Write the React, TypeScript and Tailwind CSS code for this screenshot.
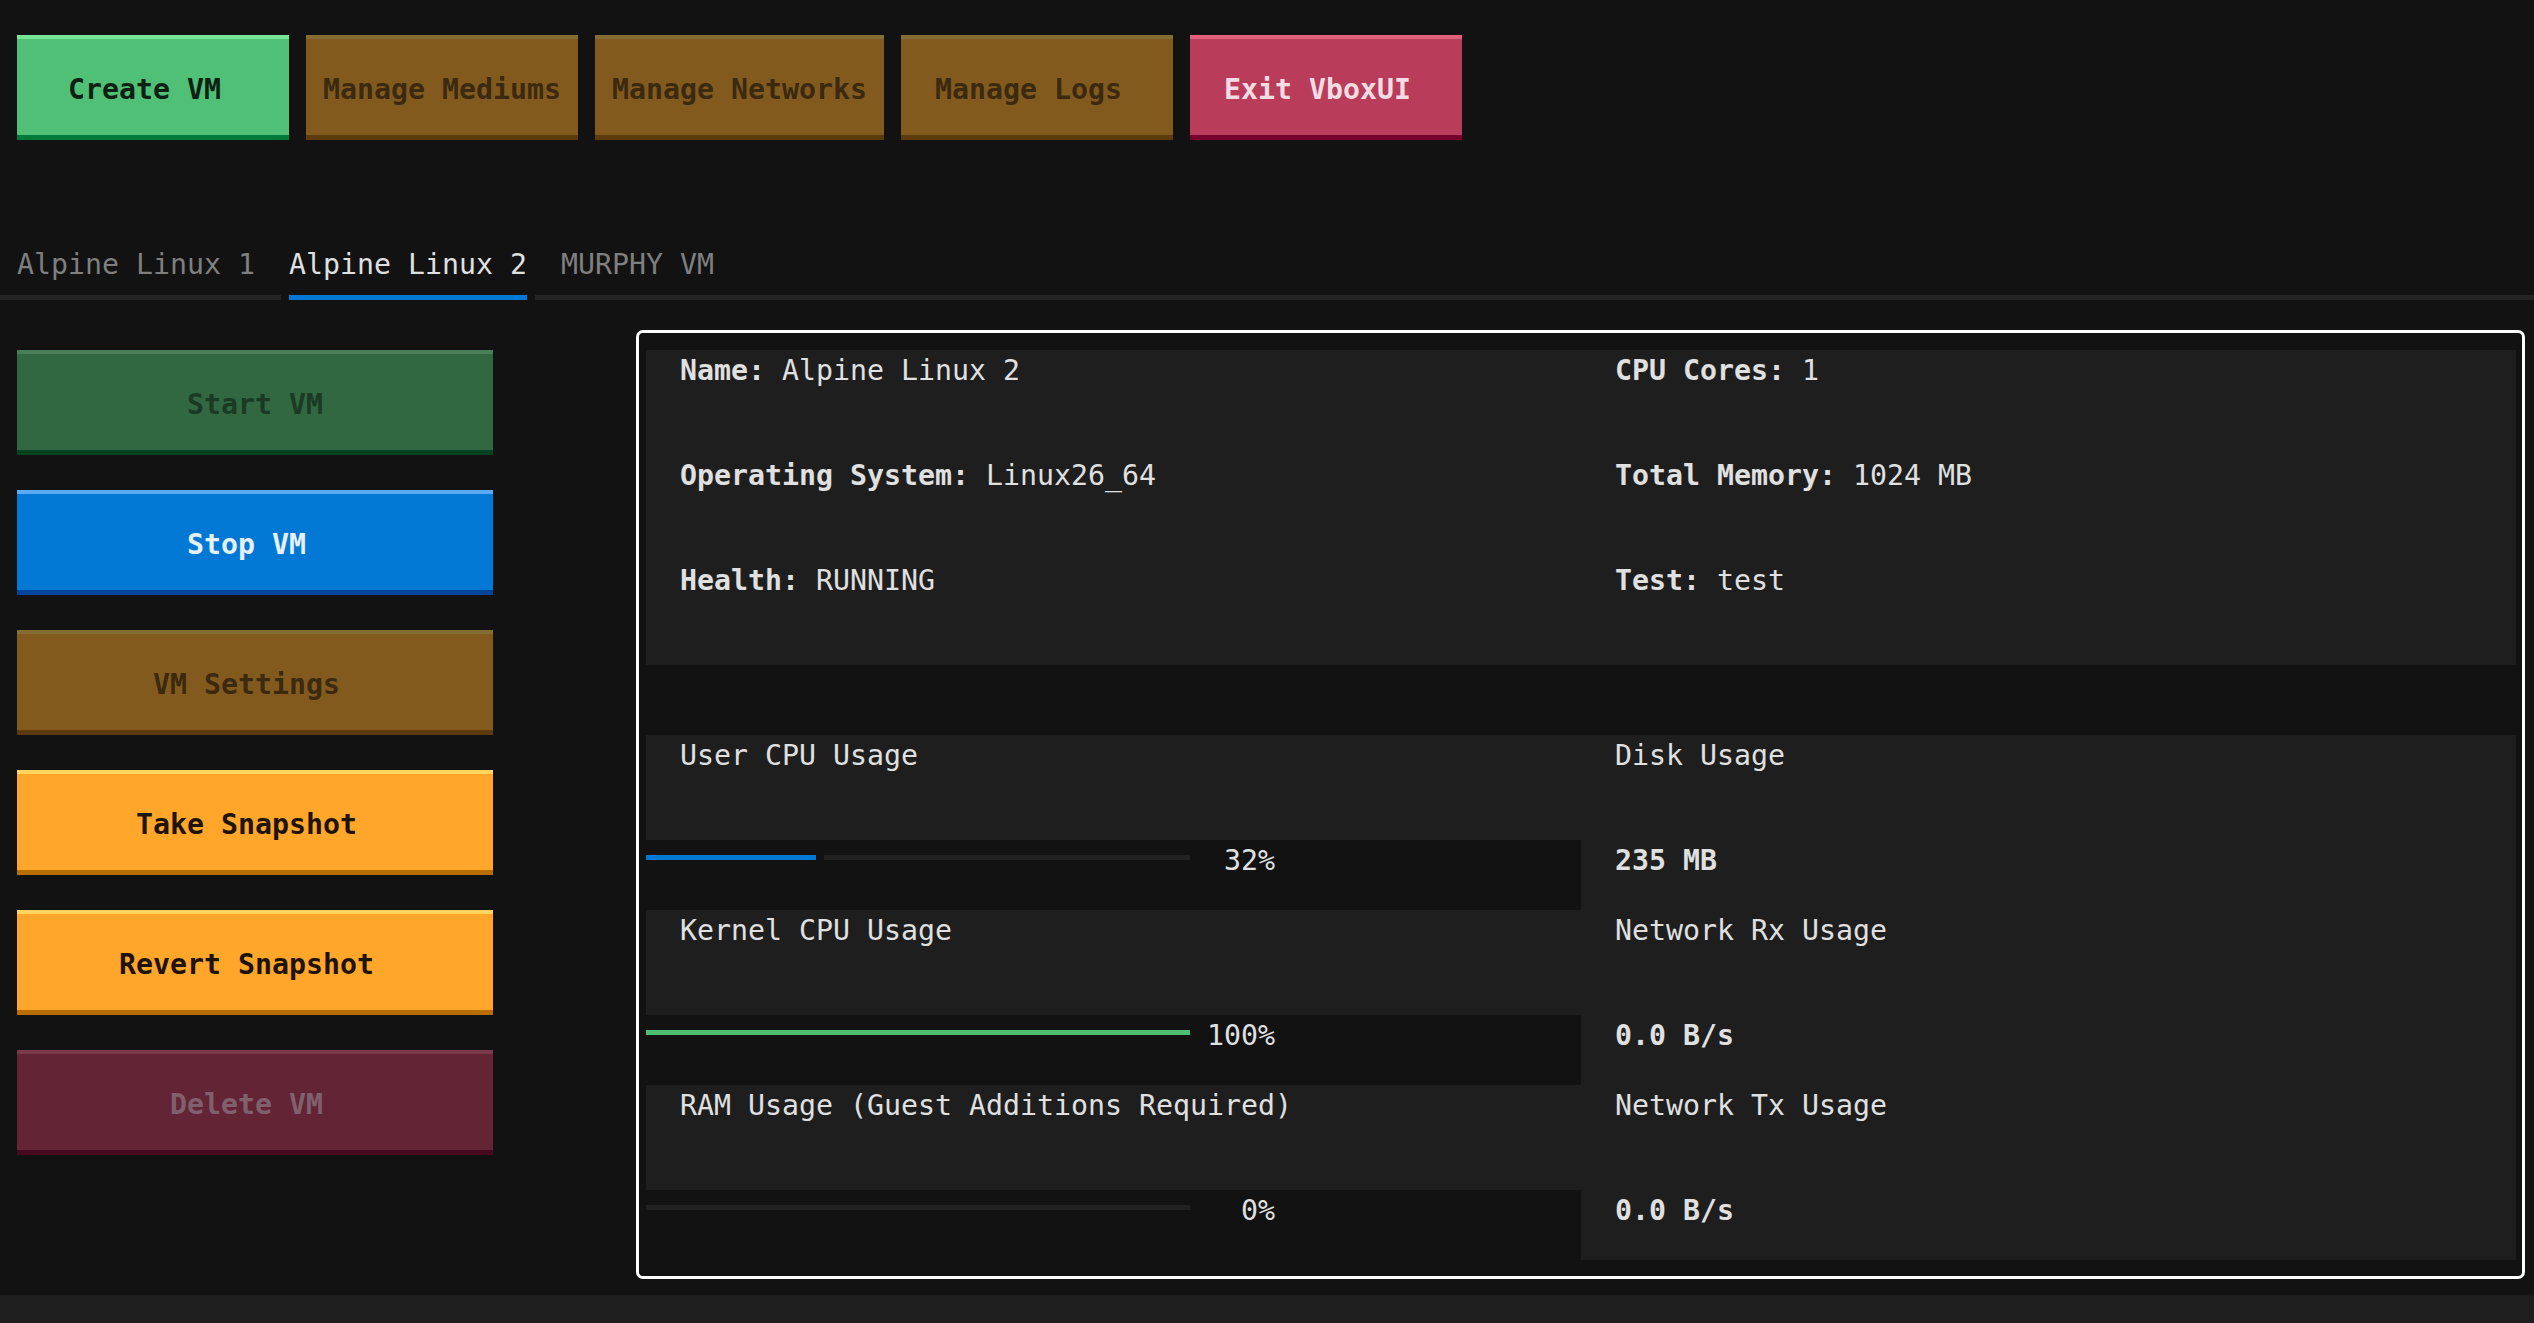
import React from 'react';

type Tone = 'success' | 'successOff' | 'primary' | 'warning' | 'warningOff' | 'error' | 'errorOff';

const tones: Record<Tone, string> = {
  success: 'bg-[#50c076] border-t-[#77e597] border-b-[#007a3a] text-[#0e1f13]',
  successOff: 'bg-[#316842] border-t-[#4a7e59] border-b-[#06421f] text-[#1b3a24]',
  primary: 'bg-[#0178d4] border-t-[#5ca9f4] border-b-[#01449b] text-[#e6f0fa]',
  warning: 'bg-[#ffa62b] border-t-[#ffd45f] border-b-[#b86e00] text-[#1d1306]',
  warningOff: 'bg-[#835a1e] border-t-[#836d33] border-b-[#5c3a0c] text-[#3b2a10]',
  error: 'bg-[#ba3c5b] border-t-[#e2607b] border-b-[#77002a] text-[#f3dde3]',
  errorOff: 'bg-[#632536] border-t-[#7b3a4b] border-b-[#46091d] text-[#80606c]',
};

function TuiButton({ label, tone, cells }: { label: string; tone: Tone; cells: number }) {
  const odd = (cells - label.length) % 2 === 1;
  return (
    <div
      className={`h-[105px] shrink-0 border-t-[4px] border-b-[5px] pt-[5px] flex items-center justify-center font-bold whitespace-pre ${tones[tone]} ${odd ? 'pr-[17px]' : ''}`}
      style={{ width: cells * 17 }}
    >
      {label}
    </div>
  );
}

function Info({ label, value }: { label: string; value: string }) {
  return (
    <div className="h-[105px] bg-[#1e1e1e] pl-[34px] pt-[3px] whitespace-pre">
      <span className="font-bold">{label}</span> {value}
    </div>
  );
}

function Meter({ label, pct, fill }: { label: string; pct: number; fill: string }) {
  const cells = Math.floor((pct / 100) * 32);
  const filled = cells * 17;
  return (
    <>
      <div className="h-[105px] bg-[#1e1e1e] pl-[34px] pt-[3px] whitespace-pre">{label}</div>
      <div className="h-[70px] flex items-start">
        <div className="h-[35px] flex items-center">
          <div className="w-[544px] h-[5px] flex">
            {filled > 0 && <div className={`h-full ${fill}`} style={{ width: filled }} />}
            {filled < 544 && (
              <div className="h-full bg-[#222222]" style={{ width: 544 - filled - (filled > 0 ? 8 : 0), marginLeft: filled > 0 ? 8 : 0 }} />
            )}
          </div>
        </div>
        <div className="w-[85px] h-[35px] pt-[3px] text-right">{pct}%</div>
      </div>
    </>
  );
}

function Stat({ label, value }: { label: string; value: string }) {
  return (
    <>
      <div className="h-[105px] pl-[34px] pt-[3px] whitespace-pre">{label}</div>
      <div className="h-[70px] pl-[34px] pt-[3px] font-bold whitespace-pre">{value}</div>
    </>
  );
}

export default function App() {
  return (
    <div className="h-screen w-full overflow-hidden bg-[#121212] text-[#e0e0e0] font-['DejaVu_Sans_Mono',monospace] text-[28.24px] leading-[35px] flex flex-col">
      <div className="h-[35px] shrink-0" />
      <div className="h-[105px] shrink-0 flex gap-[17px] pl-[17px]">
        <TuiButton label="Create VM" tone="success" cells={16} />
        <TuiButton label="Manage Mediums" tone="warningOff" cells={16} />
        <TuiButton label="Manage Networks" tone="warningOff" cells={17} />
        <TuiButton label="Manage Logs" tone="warningOff" cells={16} />
        <TuiButton label="Exit VboxUI" tone="error" cells={16} />
      </div>
      <div className="h-[105px] shrink-0" />

      {/* tabs */}
      <div className="h-[35px] shrink-0 pt-[2px] flex whitespace-pre">
        <div className="w-[272px] pl-[17px] text-[#7f7f7f]">Alpine Linux 1</div>
        <div className="w-[272px] pl-[17px] text-[#e0e0e0]">Alpine Linux 2</div>
        <div className="w-[187px] pl-[17px] text-[#7f7f7f]">MURPHY VM</div>
      </div>
      <div className="h-[35px] shrink-0 flex items-center">
        <div className="w-[281px] h-[5px] bg-[#242424]" />
        <div className="w-[238px] h-[5px] bg-[#0178d4] ml-[8px]" />
        <div className="flex-1 h-[5px] bg-[#242424] ml-[8px]" />
      </div>

      <div className="h-[980px] shrink-0 flex">
        <div className="w-[493px] pl-[17px] pt-[35px] flex flex-col gap-[35px]">
          <TuiButton label="Start VM" tone="successOff" cells={28} />
          <TuiButton label="Stop VM" tone="primary" cells={28} />
          <TuiButton label="VM Settings" tone="warningOff" cells={28} />
          <TuiButton label="Take Snapshot" tone="warning" cells={28} />
          <TuiButton label="Revert Snapshot" tone="warning" cells={28} />
          <TuiButton label="Delete VM" tone="errorOff" cells={28} />
        </div>

        <div className="ml-[143px] mt-[15px] w-[1889px] h-[949px] border-[3px] border-white rounded-[7px] pt-[17px] pl-[7px] pr-[6px] pb-[16px]">
          <div className="grid grid-cols-[935px_935px]">
            <div>
              <Info label="Name:" value="Alpine Linux 2" />
              <Info label="Operating System:" value="Linux26_64" />
              <Info label="Health:" value="RUNNING" />
            </div>
            <div>
              <Info label="CPU Cores:" value="1" />
              <Info label="Total Memory:" value="1024 MB" />
              <Info label="Test:" value="test" />
            </div>
          </div>
          <div className="h-[70px]" />
          <div className="grid grid-cols-[935px_935px]">
            <div>
              <Meter label="User CPU Usage" pct={32} fill="bg-[#0178d4]" />
              <Meter label="Kernel CPU Usage" pct={100} fill="bg-[#4ebf71]" />
              <Meter label="RAM Usage (Guest Additions Required)" pct={0} fill="bg-[#0178d4]" />
            </div>
            <div className="bg-[#1e1e1e]">
              <Stat label="Disk Usage" value="235 MB" />
              <Stat label="Network Rx Usage" value="0.0 B/s" />
              <Stat label="Network Tx Usage" value="0.0 B/s" />
            </div>
          </div>
        </div>
      </div>

      <div className="h-[28px] shrink-0 bg-[#1e1e1e]" />
    </div>
  );
}
